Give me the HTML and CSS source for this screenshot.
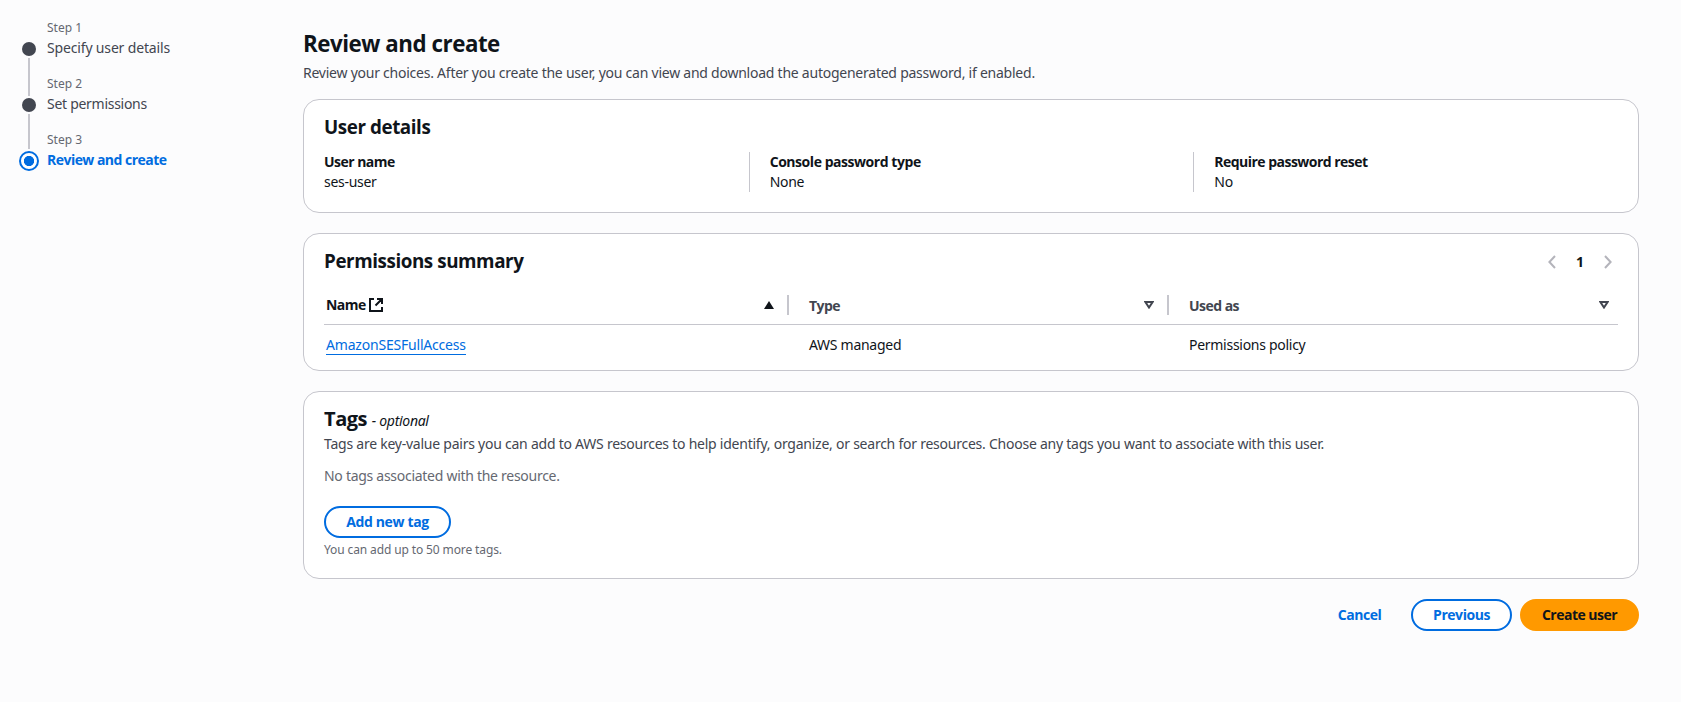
FILE: index.html
```html
<!DOCTYPE html>
<html lang="en">
<head>
<meta charset="utf-8">
<title>Review and create</title>
<link rel="stylesheet" href="styles.css">
</head>
<body>
<div class="layout">
  <nav class="steps">
    <div class="step">
      <div class="step-rail"><span class="dot"></span><span class="rail rail-first"></span></div>
      <div><div class="step-label">Step 1</div><div class="step-title t-specify">Specify user details</div></div>
    </div>
    <div class="step">
      <div class="step-rail"><span class="dot"></span><span class="rail rail-second"></span></div>
      <div><div class="step-label">Step 2</div><div class="step-title">Set permissions</div></div>
    </div>
    <div class="step">
      <div class="step-rail"><span class="ring"></span></div>
      <div><div class="step-label">Step 3</div><div class="step-title current">Review and create</div></div>
    </div>
  </nav>
  <main class="content">
    <h1 class="condensed">Review and create</h1>
    <p class="lead">Review your choices. After you create the user, you can view and download the autogenerated password, if enabled.</p>

    <section class="card details">
      <h2 class="condensed">User details</h2>
      <div class="columns">
        <div class="column"><div class="key">User name</div><div class="value">ses-user</div></div>
        <div class="column"><div class="key t-console">Console password type</div><div class="value">None</div></div>
        <div class="column"><div class="key">Require password reset</div><div class="value">No</div></div>
      </div>
    </section>

    <section class="card permissions">
      <div class="card-head">
        <h2 class="condensed">Permissions summary</h2>
        <div class="pager">
          <svg width="8" height="14" viewBox="0 0 8 14"><path d="M7 1 1.4 7 7 13"/></svg>
          <span>1</span>
          <svg width="8" height="14" viewBox="0 0 8 14"><path d="M1 1l5.6 6L1 13"/></svg>
        </div>
      </div>
      <div class="table">
        <div class="row head">
          <div class="cell sorted"><span class="sorted-label">Name
            <svg class="external" width="14" height="14" viewBox="0 0 14 14"><path d="M5 1H1v12h12V9M8 1h5v5M13 1 6.5 7.5"/></svg></span>
            <svg class="sort" width="10" height="8" viewBox="0 0 10 8"><path d="M5 0l5 8H0z" fill="currentColor"/></svg>
          </div>
          <div class="cell"><span class="label">Type</span>
            <svg class="sort" width="10" height="8" viewBox="0 0 10 8"><path d="M1.4 1h7.2L5 6.5z" fill="none" stroke="currentColor" stroke-width="2"/></svg>
          </div>
          <div class="cell"><span class="label">Used as</span>
            <svg class="sort" width="10" height="8" viewBox="0 0 10 8"><path d="M1.4 1h7.2L5 6.5z" fill="none" stroke="currentColor" stroke-width="2"/></svg>
          </div>
        </div>
        <div class="row">
          <div class="cell"><a class="link">AmazonSESFullAccess</a></div>
          <div class="cell">AWS managed</div>
          <div class="cell">Permissions policy</div>
        </div>
      </div>
    </section>

    <section class="card tags">
      <h2>Tags <em>- optional</em></h2>
      <p class="tags-text">Tags are key-value pairs you can add to AWS resources to help identify, organize, or search for resources. Choose any tags you want to associate with this user.</p>
      <p class="empty">No tags associated with the resource.</p>
      <button class="button add">Add new tag</button>
      <p class="hint">You can add up to 50 more tags.</p>
    </section>

    <div class="actions">
      <button class="button text">Cancel</button>
      <button class="button previous">Previous</button>
      <button class="button primary">Create user</button>
    </div>
  </main>
</div>
</body>
</html>
```
FILE: styles.css
```css
* { box-sizing: border-box; }
body {
  margin: 0;
  background: #fcfcfd;
  color: #0f141a;
  font: 14px/20px "Noto Sans", "Open Sans", sans-serif;
  letter-spacing: -0.28px;
}
h1, h2, p { margin: 0; }
h1, h2, .key, .head, .current, .button, .pager { font-weight: 700; font-family: "Open Sans", "Noto Sans", sans-serif; letter-spacing: -0.53px; }
svg { display: block; flex: none; }

.layout { display: flex; height: 702px; }
.steps { width: 303px; padding: 18px 0 0 19px; flex: none; }
.step { display: flex; height: 56px; gap: 8px; }
.step-rail { width: 20px; display: flex; flex-direction: column; align-items: center; }
.dot { width: 14px; height: 14px; margin-top: 24px; border-radius: 50%; background: #424650; flex: none; }
.rail { width: 2px; margin-top: 2px; background: #c6c6cd; flex: none; }
.rail-first { height: 38px; }
.rail-second { height: 35px; }
.ring { width: 20px; height: 20px; margin-top: 21px; border: 2px solid #006ce0; border-radius: 50%; background: radial-gradient(circle, #006ce0 4.8px, #fff 5.4px); }
.step-label { font-size: 12px; color: #656871; line-height: 20px; letter-spacing: 0; }
.step-title { color: #424650; line-height: 20px; white-space: nowrap; }
.step-title.current { color: #006ce0; }
.t-specify { letter-spacing: -0.16px; }

.content { width: 1336px; padding-top: 28px; flex: none; white-space: nowrap; }
h1 { font-size: 24px; line-height: 30px; letter-spacing: -0.5px; }
.lead { margin-top: 5px; color: #424650; letter-spacing: -0.24px; }
.card { background: #fff; border: 1px solid #c6c6cd; border-radius: 16px; padding: 0 20px; }
h2 { font-size: 20px; line-height: 24px; letter-spacing: -0.45px; }
.condensed { width: max-content; transform: scaleX(0.94); transform-origin: left; }
h1.condensed { transform: scaleX(0.93); }
.details { margin-top: 16px; height: 114px; padding-top: 15px; }
.columns { display: grid; grid-template-columns: repeat(3, 1fr); margin: 13px -20px 0; }
.column { height: 40px; padding-left: 20px; }
.column + .column { border-left: 1px solid #c6c6cd; }
.t-console { letter-spacing: -0.45px; }

.permissions { margin-top: 20px; height: 138px; padding-top: 15px; }
.card-head { display: flex; justify-content: space-between; }
.pager { display: flex; align-items: center; gap: 20px; padding-right: 6px; height: 26px; letter-spacing: 0; }
.pager path { fill: none; stroke: #b4b4bb; stroke-width: 2; }
.table { margin-top: 16px; }
.row { display: grid; grid-template-columns: 465px 380px 1fr; height: 40px; }
.head { height: 34px; border-bottom: 1px solid #c6c6cd; color: #424650; }
.cell { display: flex; align-items: center; padding-left: 20px; }
.cell:first-child { padding-left: 2px; }
.head .cell { height: 20px; margin-top: 4px; padding-right: 14px; }
.head .cell:nth-child(-n+2) { border-right: 2px solid #c6c6cd; padding-right: 13px; }
.head .cell:nth-child(3) { padding-right: 9px; }
.sorted { color: #0f141a; }
.sorted-label { display: flex; align-items: center; gap: 3px; padding-bottom: 1px; }
.label { padding-top: 1px; }
.sort { margin-left: auto; }
.external path { fill: none; stroke: currentColor; stroke-width: 2; }
.link { color: #006ce0; border-bottom: 1px solid #006ce0; line-height: 18px; letter-spacing: -0.2px; }

.tags { margin-top: 20px; height: 188px; padding-top: 15px; }
em { font-weight: 400; font-size: 14px; font-family: "Noto Sans", sans-serif; letter-spacing: -0.3px; }
.tags-text { margin-top: 1px; color: #424650; letter-spacing: -0.24px; }
.empty { margin-top: 12px; color: #656871; }
.hint { margin-top: 2px; font-size: 12px; color: #656871; letter-spacing: -0.12px; }
.button { height: 32px; padding: 0; border: 2px solid #006ce0; border-radius: 20px; background: #fff; color: #006ce0; font-size: 14px; line-height: 20px; letter-spacing: -0.45px; }
.add { display: block; width: 127px; margin-top: 20px; letter-spacing: -0.36px; }
.actions { display: flex; justify-content: flex-end; margin-top: 20px; }
.text { width: 87px; border-color: transparent; background: transparent; margin-right: 8px; }
.previous { width: 101px; margin-right: 8px; }
.primary { width: 119px; border-color: #ff9900; background: #ff9900; color: #0f141a; letter-spacing: -0.52px; }
```
